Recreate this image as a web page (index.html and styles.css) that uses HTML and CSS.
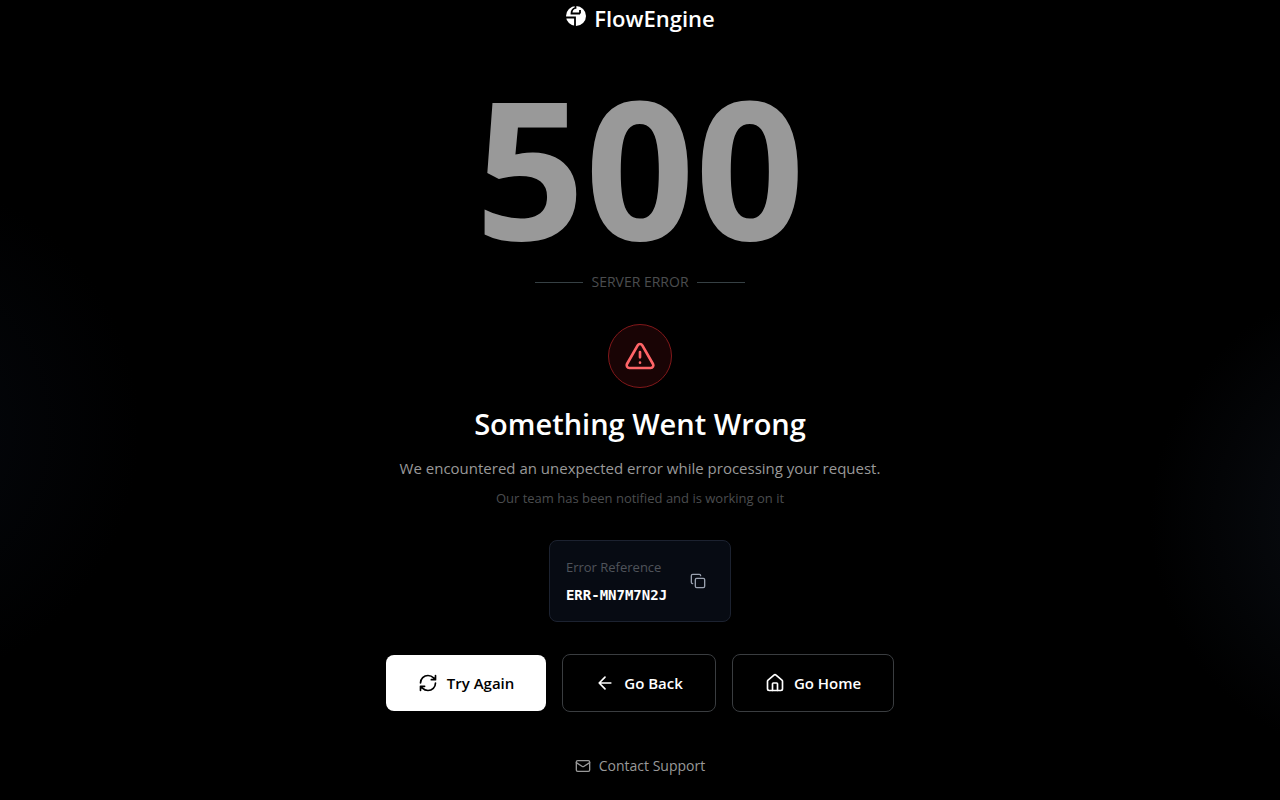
FILE: index.html
```html
<!DOCTYPE html>
<html lang="en">

<head>
  <meta charset="UTF-8">
  <meta name="viewport" content="width=device-width, initial-scale=1.0">
  <title>Server Error - FlowEngine</title>
  <link rel="stylesheet" href="styles.css">
</head>

<body>
  <main class="page">
    <a class="logo" href="#">
      <svg width="22" height="22" viewBox="0 0 22 22">
        <circle cx="11" cy="11" r="10" fill="#fff"/>
        <path d="M10.500 0v3Q6.500 4 6.500 8.500H15M0 12.500h10V22M15 8.500V5" fill="none" stroke="#000" stroke-width="1.800"/>
      </svg>
      <span>FlowEngine</span>
    </a>

    <div class="code">500</div>
    <div class="divider">Server Error</div>

    <div class="warning">
      <svg class="icon" width="32" height="32" viewBox="0 0 24 24">
        <path d="m21.730 18-8-14a2 2 0 0 0-3.480 0l-8 14A2 2 0 0 0 4 21h16a2 2 0 0 0 1.730-3"/>
        <path d="M12 9v4M12 17h.01"/>
      </svg>
    </div>

    <h1>Something Went Wrong</h1>
    <p class="message">We encountered an unexpected error while processing your request.</p>
    <p class="note">Our team has been notified and is working on it</p>

    <div class="reference">
      <div>
        <div class="reference-label">Error Reference</div>
        <code>ERR-MN7M7N2J</code>
      </div>
      <button class="copy" type="button" aria-label="Copy error reference">
        <svg class="icon" width="16" height="16" viewBox="0 0 24 24">
          <rect x="8" y="8" width="14" height="14" rx="2"/>
          <path d="M4 16c-1.100 0-2-.9-2-2V4c0-1.100.9-2 2-2h10c1.100 0 2 .9 2 2"/>
        </svg>
      </button>
    </div>

    <div class="actions">
      <button class="btn primary" type="button">
        <svg class="icon" width="20" height="20" viewBox="0 0 24 24">
          <path d="M3 12a9 9 0 0 1 9-9 9.750 9.750 0 0 1 6.740 2.740L21 8M21 3v5h-5"/>
          <path d="M21 12a9 9 0 0 1-9 9 9.750 9.750 0 0 1-6.740-2.740L3 16M8 16H3v5"/>
        </svg>
        Try Again
      </button>
      <button class="btn" type="button">
        <svg class="icon" width="20" height="20" viewBox="0 0 24 24">
          <path d="m12 19-7-7 7-7M19 12H5"/>
        </svg>
        Go Back
      </button>
      <a class="btn" href="#">
        <svg class="icon" width="20" height="20" viewBox="0 0 24 24">
          <path d="M15 21v-8a1 1 0 0 0-1-1h-4a1 1 0 0 0-1 1v8"/>
          <path d="M3 10a2 2 0 0 1 .709-1.528l7-6a2 2 0 0 1 2.582 0l7 6A2 2 0 0 1 21 10v9a2 2 0 0 1-2 2H5a2 2 0 0 1-2-2z"/>
        </svg>
        Go Home
      </a>
    </div>

    <a class="support" href="#">
      <svg class="icon" width="16" height="16" viewBox="0 0 24 24">
        <rect x="2" y="4" width="20" height="16" rx="2"/>
        <path d="m22 7-8.970 5.700a1.940 1.940 0 0 1-2.060 0L2 7"/>
      </svg>
      Contact Support
    </a>
  </main>
</body>

</html>
```

FILE: styles.css
```css
* {
  box-sizing: border-box;
}

body {
  margin: 0;
  min-height: 100vh;
  background-color: #000;
  background-image:
    radial-gradient(circle 260px at -120px 430px, #05080e, transparent),
    radial-gradient(circle 243px at calc(100% + 113px) 520px, #0b0f16, transparent);
  color: #fff;
  font-family: "Open Sans", "Noto Sans", sans-serif;
}

a {
  color: inherit;
  text-decoration: none;
}

button {
  font-family: inherit;
  cursor: pointer;
}

.icon {
  fill: none;
  stroke: currentColor;
  stroke-width: 2;
  stroke-linecap: round;
  stroke-linejoin: round;
}

.page {
  display: flex;
  flex-direction: column;
  align-items: center;
  text-align: center;
}

.logo {
  display: flex;
  gap: 7px;
  font-size: 22px;
  font-weight: 600;
  line-height: 36px;
}

.logo svg {
  margin-top: 5px;
}

.code {
  margin-top: 34px;
  font-size: 192px;
  font-weight: 700;
  line-height: 192px;
  color: #999;
}

.divider {
  display: flex;
  align-items: center;
  gap: 8px;
  margin-top: 10px;
  font-size: 14px;
  line-height: 20px;
  color: #4b4d4f;
  text-transform: uppercase;
}

.divider::before,
.divider::after {
  content: "";
  width: 48px;
  height: 1px;
  background-color: #364044;
}

.warning {
  display: flex;
  align-items: center;
  justify-content: center;
  width: 64px;
  height: 64px;
  margin-top: 32px;
  border: 1px solid #82181a;
  border-radius: 50%;
  background-color: #190405;
  color: #ff6467;
}

h1 {
  margin: 16px 0 0;
  font-size: 29px;
  font-weight: 600;
  line-height: 40px;
}

.message {
  margin: 12px 0 0;
  font-size: 15px;
  line-height: 24px;
  color: #999;
}

.note {
  margin: 8px 0 0;
  font-size: 13px;
  line-height: 20px;
  color: #4b4d4f;
}

.reference {
  display: flex;
  align-items: center;
  gap: 15px;
  margin-top: 32px;
  padding: 16px;
  border: 1px solid #1c2230;
  border-radius: 8px;
  background-color: #070b13;
  text-align: left;
}

.reference-label {
  margin-bottom: 8px;
  font-size: 13px;
  line-height: 20px;
  color: #4f535a;
}

.reference code {
  display: block;
  font-family: "DejaVu Sans Mono", monospace;
  font-size: 14px;
  font-weight: 700;
  line-height: 20px;
}

.copy {
  display: flex;
  padding: 8px;
  border: 0;
  background: none;
  color: #99a1af;
}

.actions {
  display: flex;
  flex-wrap: wrap;
  align-items: center;
  justify-content: center;
  gap: 16px;
  margin-top: 32px;
}

.btn {
  display: flex;
  align-items: center;
  gap: 9px;
  padding: 16px 32px;
  border: 1px solid #3a3d40;
  border-radius: 8px;
  background: #000;
  color: #fff;
  font-size: 15px;
  font-weight: 600;
  line-height: 24px;
}

.btn.primary {
  border: 0;
  background: #fff;
  color: #000;
}

.support {
  display: flex;
  align-items: center;
  gap: 8px;
  margin-top: 44px;
  font-size: 14px;
  line-height: 20px;
  color: #999;
}
```
